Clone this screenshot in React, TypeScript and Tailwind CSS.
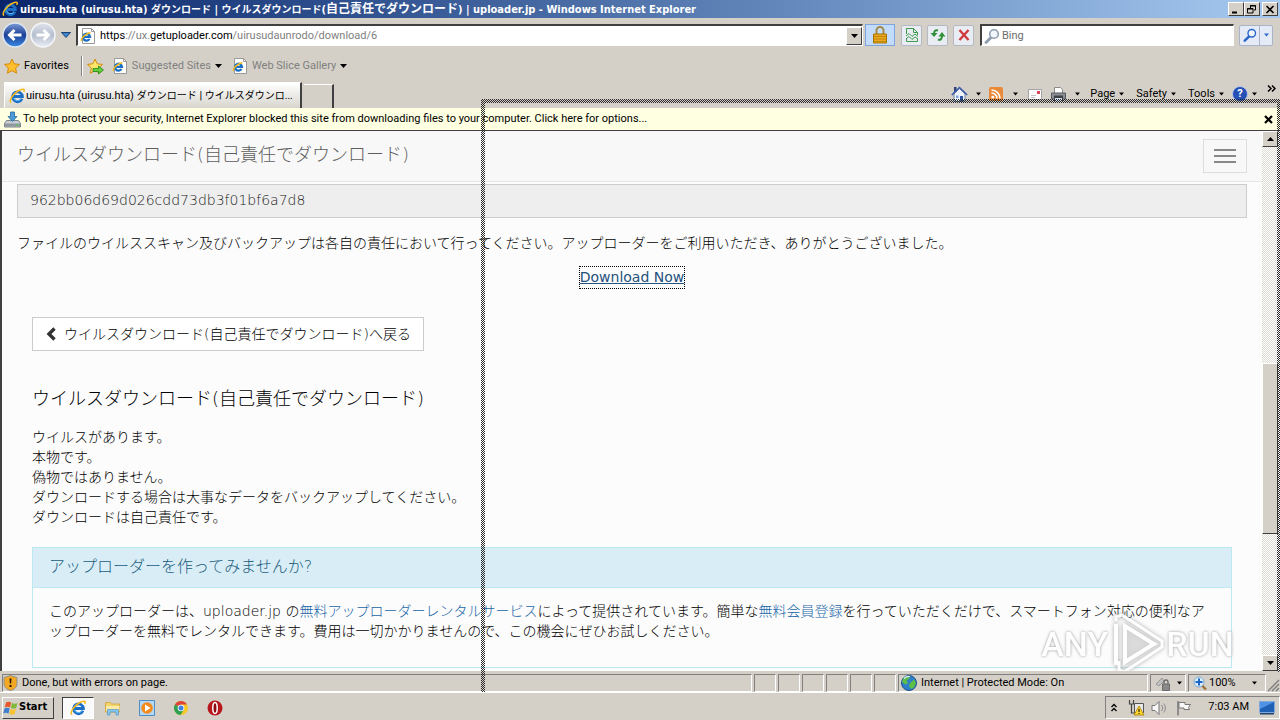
import type { ReactNode } from "react";
import clsx from "clsx";

const checker =
  "bg-[conic-gradient(#2a2a2a_25%,transparent_0_50%,#2a2a2a_0_75%,transparent_0)] bg-[length:2px_2px]";
const raised = "border border-t-white border-l-white border-r-[#404040] border-b-[#404040] bg-[#d4d0c8]";
const sunken = "border border-t-[#808080] border-l-[#808080] border-r-white border-b-white";
const toolButton = "flex h-[21px] w-[21px] items-center justify-center rounded-[2px] border border-[#b4b8c0] bg-[#e9edf3]";

function IeLogo() {
  return (
    <svg width="16" height="16" viewBox="0 0 16 16" fill="none" className="shrink-0" aria-hidden="true">
      <path d="M13 10.800a4.900 4.900 0 1 1 .4-2.300H5" stroke="#1c6fc4" strokeWidth="2.800" />
      <path d="M12 10.800a4.200 4.200 0 0 1-7.500-1" stroke="#5fc0f5" strokeWidth="1" />
      <path d="M2 14.600C-.6 12.600 4 6 9 3s7.500-2 5.600.9" stroke="#f3b91d" strokeWidth="1.500" />
    </svg>
  );
}

function IePage() {
  return (
    <svg width="16" height="16" viewBox="0 0 16 16" fill="none" className="shrink-0" aria-hidden="true">
      <path d="M2.500.5h9l3 3v12h-12z" fill="#fff" stroke="#9a9a9a" />
      <path d="M11.500.5v3h3" stroke="#9a9a9a" />
      <path d="M9.500 11a3.500 3.500 0 1 1 .5-2.200H4" stroke="#1c6fc4" strokeWidth="2.300" />
      <path d="M1.500 13C.5 10.500 5 6 10.500 4.500" stroke="#f3b91d" strokeWidth="1.400" />
    </svg>
  );
}

function Caret({ className = "text-black" }: { className?: string }) {
  return (
    <svg width="7" height="4" viewBox="0 0 7 4" className={clsx("shrink-0", className)} aria-hidden="true">
      <path d="M0 0h7L3.500 4z" fill="currentColor" />
    </svg>
  );
}

function NavArrow({ forward = false }: { forward?: boolean }) {
  return (
    <svg width="26" height="26" viewBox="0 0 26 26" fill="none" aria-hidden="true">
      <defs>
        <linearGradient id={forward ? "fwd" : "back"} x1="0" y1="0" x2="0" y2="1">
          <stop offset="0" stopColor={forward ? "#dfe4ec" : "#7d9bd8"} />
          <stop offset=".5" stopColor={forward ? "#b6bfd0" : "#1c3f96"} />
          <stop offset="1" stopColor={forward ? "#e9edf4" : "#3c8ce6"} />
        </linearGradient>
      </defs>
      <circle cx="13" cy="13" r="12" fill={`url(#${forward ? "fwd" : "back"})`} stroke={forward ? "#f4f6fa" : "#dfe6f3"} strokeWidth="1.500" />
      <path
        d={forward ? "M6.500 13h12M13.500 8l5 5-5 5" : "M19.500 13h-12M12.500 8l-5 5 5 5"}
        stroke="#fff"
        strokeWidth="3"
      />
    </svg>
  );
}

function Star({ add = false }: { add?: boolean }) {
  return (
    <svg width="17" height="17" viewBox="0 0 17 17" aria-hidden="true">
      <path
        d="M8 1l2.200 4.800 5.300.6-3.900 3.600 1 5.200L8 12.600l-4.600 2.600 1-5.200L.5 6.400l5.300-.6z"
        fill={add ? "#ffe66b" : "#fdbf2d"}
        stroke="#d48a0c"
      />
      {add && <path d="M6 10.500h5.500V8l5 4-5 4v-2.500H6z" fill="#63cf3a" stroke="#23831c" strokeWidth=".8" />}
    </svg>
  );
}

function Magnifier({ color, size = 16 }: { color: string; size?: number }) {
  return (
    <svg width={size} height={size} viewBox="0 0 16 16" fill="none" aria-hidden="true">
      <path d="M7 9.500l-5 5" stroke={color} strokeWidth="2.800" strokeLinecap="round" />
      <circle cx="10" cy="6" r="4.300" stroke={color} strokeWidth="1.600" fill="#f2f7fd" />
    </svg>
  );
}

function CaptionButton({ label, children }: { label: string; children: ReactNode }) {
  return (
    <button aria-label={label} className={clsx("flex h-[14px] w-4 items-center justify-center", raised)}>
      <svg width="10" height="9" viewBox="0 0 10 9" fill="none" stroke="#000" aria-hidden="true">
        {children}
      </svg>
    </button>
  );
}

function TitleBar() {
  return (
    <header className="flex h-[18px] shrink-0 items-center bg-linear-to-r from-[#0a246a] to-[#a6caf0] px-0.5 font-['DejaVu_Sans_Condensed','Noto_Sans_CJK_JP',sans-serif] text-[11px] font-bold whitespace-pre text-white">
      <IeLogo />
      <h1 className="flex flex-1 items-baseline pl-0.5 leading-4">
        uirusu.hta (uirusu.hta) <span className="text-[10px]">ダウンロード</span> | <span className="text-[10px]">ウイルスダウンロード</span>
        (<span className="text-xs leading-4">自己責任でダウンロード</span>) | uploader.jp - Windows Internet Explorer
      </h1>
      <div className="flex">
        <CaptionButton label="Minimize">
          <path d="M1 7.500h5" strokeWidth="2" />
        </CaptionButton>
        <CaptionButton label="Restore">
          <path d="M3.500 3V.5h5v4.500H7M3 1h6M.5 3.500h5.500v4.500H.5zM0 4h6" />
        </CaptionButton>
        <span className="w-0.5" />
        <CaptionButton label="Close">
          <path d="M1.500 1l7 7M8.500 1l-7 7" strokeWidth="1.600" />
        </CaptionButton>
      </div>
    </header>
  );
}

function AddressRow() {
  return (
    <div className="flex h-[34px] shrink-0 items-center pr-[7px] pl-0.5">
      <div className="flex gap-0.5">
        <button aria-label="Back"><NavArrow /></button>
        <button aria-label="Forward"><NavArrow forward /></button>
      </div>
      <button aria-label="Recent pages" className="px-[5px]">
        <svg width="10" height="6" viewBox="0 0 10 6" aria-hidden="true">
          <path d="M.5.5h9L5 5.500z" fill="#3f83c4" stroke="#16457c" />
        </svg>
      </button>
      <div className="flex h-[22px] flex-1 items-center border border-t-2 border-l-2 border-t-[#404040] border-l-[#404040] border-r-white border-b-white bg-white pl-0.5">
        <IePage />
        <div className="flex-1 pt-px pl-1 text-[11px] text-[#808080]">
          <span className="text-black">https</span>://ux.<span className="text-black">getuploader.com</span>/uirusudaunrodo/download/6
        </div>
        <button aria-label="Address history" className={clsx("flex h-[18px] w-4 items-center justify-center", raised)}>
          <Caret />
        </button>
      </div>
      <button aria-label="Security report" className="ml-0.5 flex h-[22px] w-[30px] items-center justify-center border border-[#7ea6dc] bg-[#c3dcfb]">
        <svg width="16" height="18" viewBox="0 0 16 18" fill="none" aria-hidden="true">
          <path d="M4.500 9V4.500a3.500 3.500 0 0 1 7 0V9" stroke="#a58a4c" strokeWidth="2" />
          <path d="M1.500 8h13v9h-13z" fill="#e9a91b" stroke="#a8730a" />
          <path d="M2 10.500h12M2 13h12M2 15.500h12" stroke="#b97d0c" strokeWidth=".8" />
        </svg>
      </button>
      <div className="flex gap-[5px] px-[6px]">
        <button aria-label="Compatibility view" className={toolButton}>
          <svg width="14" height="16" viewBox="0 0 14 16" fill="none" stroke="#3c9a4c" aria-hidden="true">
            <path d="M1.500 7V1.500h7l4 4V8M8.500 1.500v4h4M1.500 11v3.500h11V12" />
            <path d="M1 9l3-2.500 3 3L10 7l3 2.500M1 12l3-2.500 3 3 3-2.500 3 2" />
          </svg>
        </button>
        <button aria-label="Refresh" className={toolButton}>
          <svg width="16" height="14" viewBox="0 0 16 14" fill="none" aria-hidden="true">
            <path d="M8 2.500C5.500 1.500 4 3 4 6M8 11.500c2.500 1 4-.5 4-4" stroke="#2f8f37" strokeWidth="2" />
            <path d="M.5 5h7L4 9zM8.500 8.500h7L12 4z" fill="#2f8f37" />
          </svg>
        </button>
        <button aria-label="Stop" className={toolButton}>
          <svg width="12" height="12" viewBox="0 0 12 12" aria-hidden="true">
            <path d="M1.500 1l9 10M10.500 1l-9 10" stroke="#cf3a3f" strokeWidth="2.400" />
          </svg>
        </button>
      </div>
      <div className="flex h-[22px] w-[254px] items-center border border-t-2 border-l-2 border-t-[#404040] border-l-[#404040] border-r-white border-b-white bg-white pl-0.5">
        <Magnifier color="#8f9db0" />
        <input
          aria-label="Search"
          placeholder="Bing"
          className="h-4 min-w-0 flex-1 pt-px pl-0.5 text-[11px] outline-none placeholder:text-[#6d6d6d]"
        />
      </div>
      <div className="ml-[5px] flex h-[21px] w-[34px] rounded-[2px] border border-[#a9b4c8] bg-[#e4ebf6]">
        <button aria-label="Go" className="flex w-5 items-center justify-center border-r border-[#a9b4c8]">
          <Magnifier color="#2a66c9" size={14} />
        </button>
        <button aria-label="Search options" className="flex flex-1 items-center justify-center">
          <Caret className="w-[5px] text-[#2a66c9]" />
        </button>
      </div>
    </div>
  );
}

function FavoritesRow() {
  return (
    <div className="flex h-7 shrink-0 items-center pl-1 text-[11px]">
      <button className="flex items-center gap-[3px]">
        <Star />
        Favorites
      </button>
      <span className="mr-1 ml-3 h-5 w-0.5 border-l border-[#808080] bg-white" />
      <button aria-label="Add to Favorites Bar"><Star add /></button>
      <button className="ml-2 flex items-center text-[#808080]">
        <IePage />
        <span className="px-1">Suggested Sites</span>
        <Caret />
      </button>
      <button className="ml-2.5 flex items-center text-[#808080]">
        <IePage />
        <span className="px-1">Web Slice Gallery</span>
        <Caret />
      </button>
    </div>
  );
}

function TabRow() {
  return (
    <div className="flex h-7 shrink-0 items-end pl-1 text-[11px]">
      <div className="flex h-[26px] w-[298px] items-center border-t border-r-2 border-l border-t-white border-r-[#404040] border-l-white bg-linear-to-b from-white to-[#d8d5ce] pt-px pl-1">
        <IeLogo />
        <span className="flex items-baseline pl-px whitespace-pre">
          uirusu.hta (uirusu.hta) <span className="text-[10px]">ダウンロード</span> | <span className="text-[10px]">ウイルスダウンロ...</span>
        </span>
      </div>
      <button aria-label="New tab" className="ml-0.5 h-6 w-[30px] border-t border-r-2 border-t-white border-r-[#404040]" />
      <nav className="ml-auto flex h-7 items-center pr-1">
        <button aria-label="Home" className="flex items-center gap-2">
          <svg width="17" height="16" viewBox="0 0 17 16" aria-hidden="true">
            <path d="M3 8l5.500-5.500L14 8v7.500H3z" fill="#eef3fb" stroke="#7384a8" />
            <path d="M3 1h2.500v4L3 7z" fill="#2d4379" />
            <path d="M.8 9L8.500 1.500 16.200 9" fill="none" stroke="#3c5ba9" strokeWidth="1.600" />
            <path d="M9 10h3v5.500H9z" fill="#2d55a5" />
            <path d="M5 9.500h2.500V12H5z" fill="#7ea4df" />
          </svg>
          <Caret className="w-[5px]" />
        </button>
        <button aria-label="Feeds" className="ml-2 flex items-center gap-2.5">
          <svg width="14" height="14" viewBox="0 0 14 14" fill="none" stroke="#fff" strokeWidth="1.600" aria-hidden="true">
            <rect width="14" height="14" rx="2" fill="#e98a3a" stroke="none" />
            <circle cx="3.800" cy="10.200" r="1.400" fill="#fff" stroke="none" />
            <path d="M2.500 6a5.500 5.500 0 0 1 5.500 5.500M2.500 3a8.500 8.500 0 0 1 8.500 8.500" />
          </svg>
          <Caret className="w-[5px]" />
        </button>
        <button aria-label="Read mail" className="ml-2.5">
          <svg width="14" height="11" viewBox="0 0 14 11" aria-hidden="true">
            <path d="M.5.5h13v10H.5z" fill="#fdfdfd" stroke="#a5a5a5" />
            <path d="M9 2h3v3H9z" fill="#d8475b" />
            <path d="M3 6.500h5M3 8.500h4" stroke="#c2c2c2" />
          </svg>
        </button>
        <button aria-label="Print" className="ml-2 flex items-center gap-2">
          <svg width="17" height="16" viewBox="0 0 17 16" aria-hidden="true">
            <path d="M4.500 1.500h6l2 2V8h-8z" fill="#fff" stroke="#8b8b8b" />
            <path d="M1.500 7h14v6h-14z" fill="#8d9196" stroke="#55585c" />
            <path d="M4 9.500h9V15H4z" fill="#3d4044" />
            <path d="M5 12h7v3H5z" fill="#cfe0f2" />
          </svg>
          <Caret className="w-[5px]" />
        </button>
        <button className="ml-2.5 flex items-center gap-1">Page <Caret className="w-[5px]" /></button>
        <button className="ml-3 flex items-center gap-1">Safety <Caret className="w-[5px]" /></button>
        <button className="ml-3 flex items-center gap-1">Tools <Caret className="w-[5px]" /></button>
        <button aria-label="Help" className="ml-2 flex items-center gap-1">
          <span className="flex size-4 items-center justify-center rounded-full border border-[#b6c4e8] bg-[#2450b5] text-[11px] font-bold text-white">?</span>
          <Caret className="w-[5px]" />
        </button>
        <button aria-label="More commands" className="mb-3 ml-2.5">
          <svg width="9" height="7" viewBox="0 0 9 7" fill="none" stroke="#000" strokeWidth="1.500" aria-hidden="true">
            <path d="M1 .5l3 3-3 3M5 .5l3 3-3 3" />
          </svg>
        </button>
      </nav>
    </div>
  );
}

function InfoBar() {
  return (
    <div role="alert" className="flex h-[22px] shrink-0 items-center bg-[#ffffe1] pr-[7px] pl-1 text-[11px]">
      <svg width="17" height="17" viewBox="0 0 17 17" aria-hidden="true">
        <path d="M2.500 9.500h12l2 3v3.500H.5v-3.500z" fill="#c9ced3" stroke="#7d858c" />
        <path d="M1 12.500h15v3H1z" fill="#8f979f" />
        <path d="M12 13.500h3v1h-3z" fill="#5fd046" />
        <path d="M6.500 1h4v4.500h2.500L8.500 10.500 4 5.500h2.500z" fill="#4a9ad8" stroke="#27679f" strokeWidth=".8" />
      </svg>
      <p className="flex-1 pl-0.5">
        To help protect your security, Internet Explorer blocked this site from downloading files to your computer. Click here for options...
      </p>
      <button aria-label="Close">
        <svg width="9" height="9" viewBox="0 0 9 9" aria-hidden="true">
          <path d="M1 1l7 7M8 1L1 8" stroke="#000" strokeWidth="2.200" />
        </svg>
      </button>
    </div>
  );
}

function ScrollBar() {
  return (
    <div className="mr-[2px] flex w-4 shrink-0 flex-col bg-[conic-gradient(#fff_25%,#dedbd5_0_50%,#fff_0_75%,#dedbd5_0)] bg-[length:2px_2px]">
      <button aria-label="Scroll up" className={clsx("flex h-4 items-center justify-center", raised)}>
        <Caret className="rotate-180" />
      </button>
      <div className="flex-[216]" />
      <div className={clsx("flex-[170]", raised)} />
      <div className="flex-[121]" />
      <button aria-label="Scroll down" className={clsx("flex h-4 items-center justify-center", raised)}>
        <Caret />
      </button>
    </div>
  );
}

function Watermark() {
  return (
    <div className="pointer-events-none absolute right-7 -bottom-1 flex items-center font-['Roboto',sans-serif] text-[34px] leading-[60px] font-medium text-white opacity-90 [text-shadow:0_0_3px_#888]">
      <span>ANY</span>
      <svg width="58" height="62" viewBox="0 0 58 62" fill="none" className="drop-shadow-[0_0_2px_#999]" aria-hidden="true">
        <path d="M8 11v41" stroke="#fff" strokeWidth="4" />
        <path d="M8 8v-4l6-2 40 26v6L16 59l-5-2V48" stroke="#fff" strokeWidth="3" />
        <path d="M17 13v36l29-18z" stroke="#fff" strokeWidth="4" fill="#e4e4e4" fillOpacity=".6" />
      </svg>
      <span>RUN</span>
    </div>
  );
}

function WebPage() {
  return (
    <main className="relative min-w-0 flex-1 overflow-hidden bg-[#fcfcfc] font-['DejaVu_Sans','Noto_Sans_CJK_JP',sans-serif] text-sm font-light text-black">
      <nav className="flex h-[51px] items-center justify-between border-b border-[#e7e7e7] bg-[#f8f8f8] px-[15px]">
        <a href="#top" className="pb-0.5 text-lg leading-5 text-[#5e5e5e]">ウイルスダウンロード(自己責任でダウンロード)</a>
        <button aria-label="Toggle navigation" className="flex h-[34px] w-11 flex-col items-center justify-center gap-1 border border-[#ddd]">
          <span className="h-0.5 w-[22px] bg-[#888]" />
          <span className="h-0.5 w-[22px] bg-[#888]" />
          <span className="h-0.5 w-[22px] bg-[#888]" />
        </button>
      </nav>
      <div className="px-[15px] pt-0.5">
        <input
          aria-label="MD5"
          readOnly
          defaultValue="962bb06d69d026cdd73db3f01bf6a7d8"
          className="block h-[34px] w-full border border-[#ccc] bg-[#eee] px-3 pb-0.5 text-[#222] outline-none"
        />
        <p className="mt-[15px] leading-5">
          ファイルのウイルススキャン及びバックアップは各自の責任において行ってください。アップローダーをご利用いただき、ありがとうございました。
        </p>
        <p className="mt-[13px] text-center leading-[23px]">
          <a href="#download" className="inline-block border border-dotted border-black leading-[21px] font-normal text-[#23527c] underline">Download Now</a>
        </p>
      </div>
      <div className="px-[30px] pt-7">
        <a href="#back" className="inline-flex h-[34px] items-center border border-[#ccc] bg-white px-3">
          <svg width="19" height="14" viewBox="0 0 19 14" fill="none" aria-hidden="true">
            <path d="M9.500 1.500L4 7l5.500 5.500" stroke="#333" strokeWidth="3.400" />
          </svg>
          ウイルスダウンロード(自己責任でダウンロード)へ戻る
        </a>
        <h2 className="mt-[38px] text-lg leading-5">ウイルスダウンロード(自己責任でダウンロード)</h2>
        <p className="mt-[18px] leading-5">
          ウイルスがあります。<br />
          本物です。<br />
          偽物ではありません。<br />
          ダウンロードする場合は大事なデータをバックアップしてください。<br />
          ダウンロードは自己責任です。
        </p>
        <section className="mt-5 border border-[#bce8f1]">
          <h3 className="h-10 border-b border-[#bce8f1] bg-[#d9edf7] px-4 text-base leading-[38px] text-[#205d7c]">アップローダーを作ってみませんか?</h3>
          <p className="px-4 pt-[13px] pb-[26px] leading-5">
            このアップローダーは、uploader.jp の<a href="#rental" className="text-[#1765a8]">無料アップローダーレンタルサービス</a>によって提供されています。簡単な
            <a href="#signup" className="text-[#1765a8]">無料会員登録</a>を行っていただくだけで、スマートフォン対応の便利なアップローダーを無料でレンタルできます。費用は一切かかりませんので、この機会にぜひお試しください。
          </p>
        </section>
      </div>
      <Watermark />
    </main>
  );
}

function StatusBar() {
  return (
    <div className="flex h-[22px] shrink-0 items-stretch gap-0.5 border-b border-white pt-[3px] pl-0.5 text-[11px]">
      <div className={clsx("flex flex-1 items-center", sunken)}>
        <svg width="15" height="16" viewBox="0 0 15 16" aria-hidden="true">
          <path d="M7.500.5l6.500 2v6c0 4-3.500 6.500-6.500 7-3-.5-6.500-3-6.500-7v-6z" fill="#f3a824" stroke="#8f8f8f" />
          <path d="M6.500 3.500h2l-.4 5H6.900zM6.500 10h2v2h-2z" fill="#2b1500" />
        </svg>
        <span className="pl-1">Done, but with errors on page.</span>
      </div>
      {[0, 1, 2, 3, 4, 5].map((cell) => (
        <div key={cell} className={clsx("w-[22px]", sunken)} />
      ))}
      <div className={clsx("flex w-[250px] items-center gap-1 pl-0.5", sunken)}>
        <svg width="16" height="16" viewBox="0 0 16 16" aria-hidden="true">
          <circle cx="8" cy="8" r="7.500" fill="#2d7fc9" stroke="#1d4f8b" />
          <path d="M2 4c2-2.500 5-3 7-2.500L8 4 5.500 5 7 8 4.500 9.500 1 7zM9 8l4-3.500L15 8l-2 4.500-3 1.500-2-3z" fill="#5fbf45" />
          <path d="M3 3.500c2-2 4-2.500 6-2" stroke="#d9f0ff" strokeWidth="1.200" fill="none" />
        </svg>
        Internet | Protected Mode: On
      </div>
      <button aria-label="InPrivate filtering" className={clsx("flex w-9 items-center justify-center gap-1.5", sunken)}>
        <svg width="16" height="15" viewBox="0 0 16 15" fill="none" aria-hidden="true">
          <path d="M1 8l6-6 2 3-5 5z" fill="#c0c0c0" stroke="#9a9a9a" />
          <path d="M7.500 8h7v6.500h-7z" fill="#8a8a8a" stroke="#6a6a6a" />
          <path d="M9 8V6a2 2 0 0 1 4 0v2" stroke="#6a6a6a" strokeWidth="1.300" />
        </svg>
        <Caret className="w-[5px]" />
      </button>
      <button className={clsx("flex w-[78px] items-center gap-0.5 pl-1", sunken)}>
        <svg width="14" height="15" viewBox="0 0 14 15" fill="none" aria-hidden="true">
          <path d="M9 9.500l4 4" stroke="#a0703a" strokeWidth="2.400" />
          <circle cx="6" cy="6" r="5" fill="#dbeeff" stroke="#7fa8d2" />
          <path d="M6 2.500v7M2.500 6h7" stroke="#1d66c4" strokeWidth="2" />
        </svg>
        <span className="flex-1 text-left">100%</span>
        <Caret className="mr-2 w-[5px]" />
      </button>
      <svg width="12" height="18" viewBox="0 0 12 18" className="self-end" aria-hidden="true">
        <path d="M0 17L11 6M4 17l7-7M8 17l3-3" stroke="#808080" strokeWidth="1.500" />
      </svg>
    </div>
  );
}

function TaskBar() {
  return (
    <footer className="flex h-[27px] shrink-0 items-center pt-0.5 pl-0.5 text-[11px]">
      <button className={clsx("flex h-[22px] w-[52px] items-center font-['DejaVu_Sans_Condensed',sans-serif] font-bold", raised)}>
        <svg width="16" height="16" viewBox="0 0 16 16" className="shrink-0" aria-hidden="true">
          <path d="M3 2.500c2-1 3.500-1 5.200 0L7 7.500c-1.800-1-3.300-1-5.200 0z" fill="#e8572b" />
          <path d="M9 3c2 1 3.500 1 5.500 0l-1.300 5c-2 1-3.400 1-5.400 0z" fill="#82b93c" />
          <path d="M1.500 8.500c2-1 3.500-1 5.200 0l-1.200 5c-1.800-1-3.300-1-5.200 0z" fill="#3f7fd0" />
          <path d="M7.500 9c2 1 3.500 1 5.500 0l-1.300 5c-2 1-3.400 1-5.400 0z" fill="#f7c331" />
        </svg>
        Start
      </button>
      <div className="flex items-center pl-2">
        <button aria-label="Internet Explorer" className="flex h-[22px] w-8 items-center justify-center border border-t-[#404040] border-l-[#404040] border-r-white border-b-white bg-[#fafafa]">
          <IeLogo />
        </button>
        <button aria-label="Windows Explorer" className="ml-[11px]">
          <svg width="16" height="16" viewBox="0 0 16 16" aria-hidden="true">
            <path d="M.5 2.500h5l1 1.500h8v8H.5z" fill="#f2d36c" stroke="#d4ac45" />
            <path d="M1 6h13.500v5H1z" fill="#fbe9a5" />
            <path d="M2.500 15V9.500h11V15h-2.500v-3H5v3z" fill="#86c5ec" stroke="#5796c4" strokeWidth=".7" />
          </svg>
        </button>
        <button aria-label="Media Player" className="ml-[18px]">
          <svg width="16" height="16" viewBox="0 0 16 16" aria-hidden="true">
            <path d="M.5.5h15v15H.5z" fill="#b7d8f2" stroke="#4c8dc8" />
            <circle cx="8" cy="8" r="5.800" fill="#f28a1c" />
            <path d="M6 4.500v7L11.500 8z" fill="#fff" />
          </svg>
        </button>
        <button aria-label="Chrome" className="ml-[18px]">
          <svg width="16" height="16" viewBox="0 0 16 16" aria-hidden="true">
            <circle cx="8" cy="8" r="7" fill="#f6c927" />
            <path d="M8 8L1.900 4.500A7 7 0 0 1 14.100 4.500H8z" fill="#dc4437" />
            <path d="M8 8L1.900 4.500A7 7 0 0 0 7.500 15L11 9.500z" fill="#2fa04f" />
            <circle cx="8" cy="8" r="3.300" fill="#fff" />
            <circle cx="8" cy="8" r="2.500" fill="#3f80e0" />
          </svg>
        </button>
        <button aria-label="Opera" className="ml-[18px]">
          <svg width="16" height="16" viewBox="0 0 16 16" aria-hidden="true">
            <circle cx="8" cy="8" r="7.500" fill="#b8161d" />
            <ellipse cx="8" cy="8" rx="2.200" ry="5.500" fill="#8c0a10" stroke="#fff" strokeWidth="1.500" />
          </svg>
        </button>
      </div>
      <div className={clsx("ml-auto flex h-[23px] items-center pr-1 pl-1", sunken)}>
        <svg width="8" height="9" viewBox="0 0 8 9" fill="none" stroke="#000" strokeWidth="1.300" aria-hidden="true">
          <path d="M1.500 4L4 1.500 6.500 4M1.500 8L4 5.500 6.500 8" />
        </svg>
        <svg width="17" height="17" viewBox="0 0 17 17" className="ml-2.5" aria-hidden="true">
          <path d="M6.500 4.500h9v9h-9z" fill="#e8e8e8" stroke="#555" />
          <path d="M1.500 1v4h4V1M3.500 5v9h4" fill="none" stroke="#444" strokeWidth="1.200" />
          <path d="M11 7l5 9H6z" fill="#ffd72e" stroke="#a67c00" strokeWidth=".8" />
          <path d="M11 10v3M11 14v1" stroke="#000" />
        </svg>
        <svg width="17" height="16" viewBox="0 0 17 16" fill="none" className="ml-1.5" aria-hidden="true">
          <path d="M1 5.500h3l4-4v13l-4-4H1z" fill="#f6f6f6" stroke="#777" />
          <path d="M10.500 5c1.500 2 1.500 4 0 6M12.500 3.500c2.500 3 2.500 6 0 9" stroke="#888" />
        </svg>
        <svg width="16" height="16" viewBox="0 0 16 16" fill="none" className="ml-2" aria-hidden="true">
          <path d="M2 1v14.500" stroke="#777" strokeWidth="1.500" />
          <path d="M3 2.500h6v2h5.500l-2 3 1 2H8V8H3z" fill="#f8f8f8" stroke="#777" />
        </svg>
        <time className="mr-2.5 ml-4">7:03 AM</time>
        <svg width="16" height="14" viewBox="0 0 16 14" aria-hidden="true">
          <path d="M.5.5h15v11H.5z" fill="#1f5fb4" stroke="#7fa9dd" />
          <path d="M1 1h14L1 8z" fill="#4f94e4" />
          <path d="M1 12h14v1.500H1z" fill="#23406d" />
        </svg>
      </div>
    </footer>
  );
}

export default function App() {
  return (
    <div className="relative flex h-screen flex-col overflow-hidden bg-[#d4d0c8] font-['Roboto','Noto_Sans_CJK_JP',sans-serif] text-black">
      <TitleBar />
      <AddressRow />
      <FavoritesRow />
      <TabRow />
      <InfoBar />
      <div className="flex min-h-0 flex-1 border-t border-l-2 border-[#404040] bg-[#fcfcfc]">
        <WebPage />
        <ScrollBar />
      </div>
      <StatusBar />
      <TaskBar />
      {/* outline of the window being dragged */}
      <div className="pointer-events-none absolute top-[99px] right-0 bottom-7 left-[481px] flex flex-col">
        <div className={clsx("h-1", checker)} />
        <div className="flex flex-1 justify-between">
          <div className={clsx("w-1", checker)} />
          <div className={clsx("mb-5 w-[3px]", checker)} />
        </div>
      </div>
    </div>
  );
}
